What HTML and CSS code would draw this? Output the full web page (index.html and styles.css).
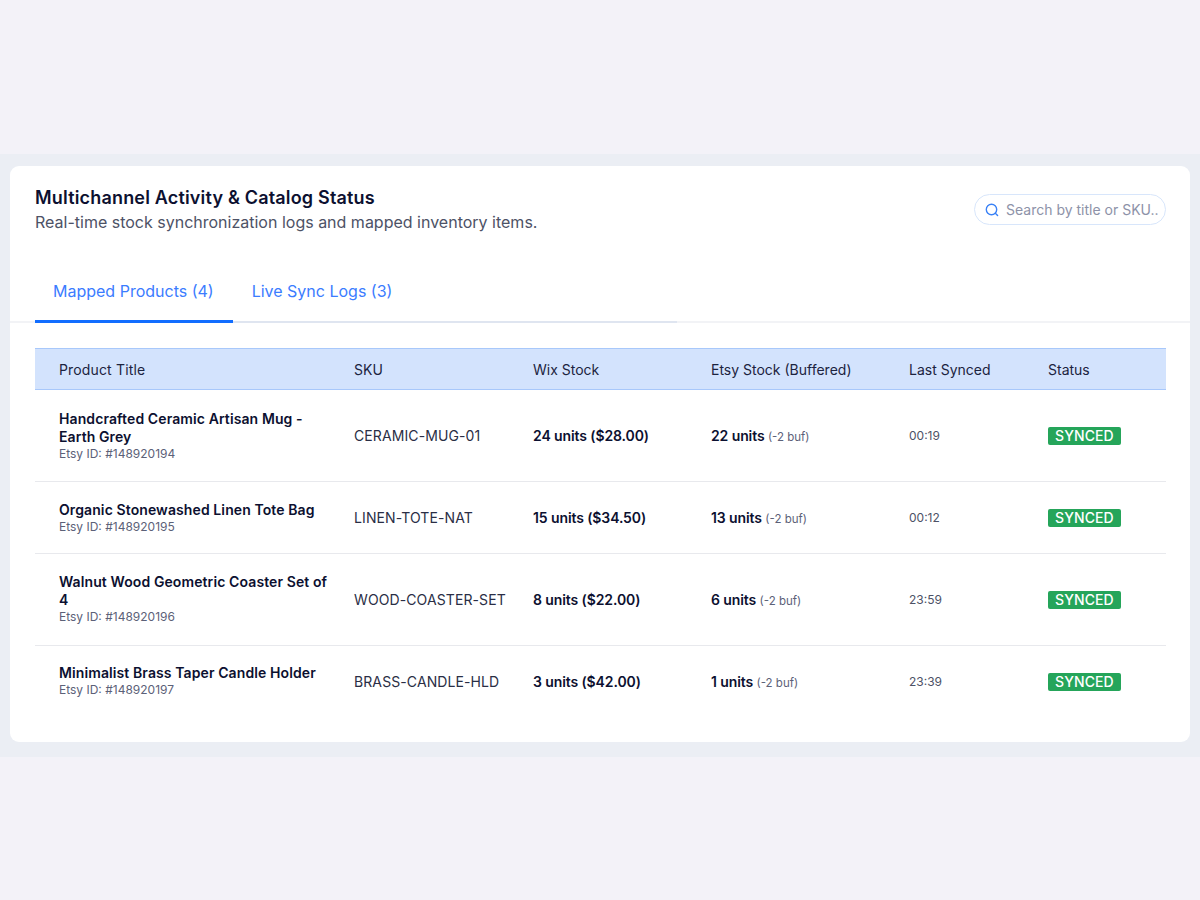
FILE: index.html
```html
<!DOCTYPE html>
<html lang="en">
<head>
  <meta charset="UTF-8">
  <meta name="viewport" content="width=device-width, initial-scale=1.0">
  <title>Multichannel Activity</title>
  <link rel="stylesheet" href="styles.css">
</head>
<body>
  <div class="band">
    <div class="card">
      <div class="card-head">
        <div>
          <h2 class="card-title">Multichannel Activity &amp; Catalog Status</h2>
          <p class="card-sub">Real-time stock synchronization logs and mapped inventory items.</p>
        </div>
        <div class="search">
          <svg class="search-icon" width="16" height="16" viewBox="0 0 16 16" fill="none">
            <circle cx="7.5" cy="7.5" r="5.2" stroke="#3b82f6" stroke-width="1.4"/>
            <path d="M11.3 11.3L13.6 13.6" stroke="#3b82f6" stroke-width="1.4" stroke-linecap="round"/>
          </svg>
          <span class="search-text">Search by title or SKU..</span>
        </div>
      </div>

      <div class="tabs">
        <div class="tab-list">
          <div class="tab active">Mapped Products (4)</div>
          <div class="tab">Live Sync Logs (3)</div>
        </div>
      </div>

      <table class="products">
        <thead>
          <tr>
            <th class="col-title">Product Title</th>
            <th class="col-sku">SKU</th>
            <th class="col-wix">Wix Stock</th>
            <th class="col-etsy">Etsy Stock (Buffered)</th>
            <th class="col-time">Last Synced</th>
            <th>Status</th>
          </tr>
        </thead>
        <tbody>
          <tr>
            <td class="product">
              <div class="name">Handcrafted Ceramic Artisan Mug - Earth Grey</div>
              <div class="etsy-id">Etsy ID: #148920194</div>
            </td>
            <td class="sku">CERAMIC-MUG-01</td>
            <td class="stock">24 units ($28.00)</td>
            <td class="stock">22 units <span class="buf">(-2 buf)</span></td>
            <td class="time">00:19</td>
            <td><span class="badge">SYNCED</span></td>
          </tr>
          <tr>
            <td class="product">
              <div class="name">Organic Stonewashed Linen Tote Bag</div>
              <div class="etsy-id">Etsy ID: #148920195</div>
            </td>
            <td class="sku">LINEN-TOTE-NAT</td>
            <td class="stock">15 units ($34.50)</td>
            <td class="stock">13 units <span class="buf">(-2 buf)</span></td>
            <td class="time">00:12</td>
            <td><span class="badge">SYNCED</span></td>
          </tr>
          <tr>
            <td class="product">
              <div class="name">Walnut Wood Geometric Coaster Set of 4</div>
              <div class="etsy-id">Etsy ID: #148920196</div>
            </td>
            <td class="sku">WOOD-COASTER-SET</td>
            <td class="stock">8 units ($22.00)</td>
            <td class="stock">6 units <span class="buf">(-2 buf)</span></td>
            <td class="time">23:59</td>
            <td><span class="badge">SYNCED</span></td>
          </tr>
          <tr>
            <td class="product">
              <div class="name">Minimalist Brass Taper Candle Holder</div>
              <div class="etsy-id">Etsy ID: #148920197</div>
            </td>
            <td class="sku">BRASS-CANDLE-HLD</td>
            <td class="stock">3 units ($42.00)</td>
            <td class="stock">1 units <span class="buf">(-2 buf)</span></td>
            <td class="time">23:39</td>
            <td><span class="badge">SYNCED</span></td>
          </tr>
        </tbody>
      </table>
    </div>
  </div>
</body>
</html>
```

FILE: styles.css
```css
body {
  margin: 0;
  padding-top: 154px;
  min-height: 746px;
  background-color: #f3f2f8;
  font-family: Inter, "Noto Sans", sans-serif;
  color: #0c1030;
}
.band {
  background-color: #ebeef4;
  padding: 12px 10px 15px;
}
.card {
  background-color: #ffffff;
  border-radius: 9px;
  height: 576px;
  box-sizing: border-box;
  padding-top: 20px;
}
.card-head {
  display: flex;
  justify-content: space-between;
  align-items: flex-start;
  padding: 0 24px 0 25px;
}
.card-title {
  margin: 0;
  font-size: 18px;
  line-height: 24px;
  font-weight: 600;
  letter-spacing: 0.18px;
}
.card-sub {
  margin: 0;
  font-size: 16px;
  line-height: 24px;
  color: #4d5266;
}
.search {
  display: flex;
  align-items: center;
  gap: 6px;
  width: 192px;
  height: 31px;
  margin-top: 8px;
  box-sizing: border-box;
  padding-left: 9px;
  border: 1px solid #d8e6fb;
  border-radius: 16px;
  overflow: hidden;
}
.search-icon {
  flex: none;
}
.search-text {
  font-size: 14px;
  color: #8d92a8;
  white-space: nowrap;
}
.tabs {
  margin-top: 29px;
  height: 60px;
  box-sizing: border-box;
  border-bottom: 2px solid #f2f3f6;
}
.tab-list {
  display: inline-flex;
  height: 60px;
  margin-left: 25px;
  padding-right: 266px;
  box-sizing: border-box;
  border-bottom: 2px solid #dfe5f0;
}
.tab {
  height: 60px;
  box-sizing: border-box;
  padding: 0 19px;
  line-height: 56px;
  font-size: 16px;
  color: #3b7cff;
}
.tab.active {
  padding-left: 18px;
  border-bottom: 3px solid #116dff;
}
.products {
  width: 1131px;
  margin: 25px 0 0 25px;
  border-collapse: collapse;
  table-layout: fixed;
  font-size: 14px;
}
.products th {
  height: 40px;
  padding: 0 0 0 24px;
  background-color: #d3e3fd;
  border-top: 1px solid #a8c8fb;
  border-bottom: 1px solid #a8c8fb;
  text-align: left;
  font-weight: 400;
  color: #1c2340;
}
.col-title { width: 271px; letter-spacing: 0.15px; }
.col-sku { width: 155px; }
.col-wix { width: 154px; }
.col-etsy { width: 174px; }
.col-time { width: 115px; }
.products td {
  padding: 0 0 0 24px;
  border-bottom: 1px solid #e8e9ed;
  vertical-align: middle;
}
/* row heights come from the first cell, the rest centre against it */
.products td.product {
  padding-top: 19px;
  padding-bottom: 18px;
}
.products tr:nth-child(1) td.product {
  padding-top: 20px;
  padding-bottom: 19px;
}
.products tr:nth-child(3) td.product {
  padding-top: 19px;
  padding-bottom: 20px;
}
.products tr:nth-child(4) td.product {
  padding-top: 18px;
  padding-bottom: 19px;
}
.products tr:last-child td {
  border-bottom: none;
}
.name {
  font-weight: 600;
  line-height: 18px;
  letter-spacing: 0.1px;
  color: #0c1030;
}
.etsy-id {
  font-size: 12px;
  line-height: 16px;
  color: #5c6178;
}
.sku {
  color: #2a2e45;
  letter-spacing: 0.1px;
}
.stock {
  font-weight: 600;
  letter-spacing: -0.1px;
  white-space: nowrap;
}
.buf {
  font-size: 11.5px;
  font-weight: 400;
  letter-spacing: 0;
  color: #5c6178;
}
.time {
  font-size: 12px;
  color: #4d5266;
}
.badge {
  display: inline-block;
  padding: 0 7px;
  border-radius: 2px;
  background-color: #25a55a;
  color: #ffffff;
  font-size: 14px;
  font-weight: 500;
  letter-spacing: 0.1px;
  line-height: 18px;
}
```
